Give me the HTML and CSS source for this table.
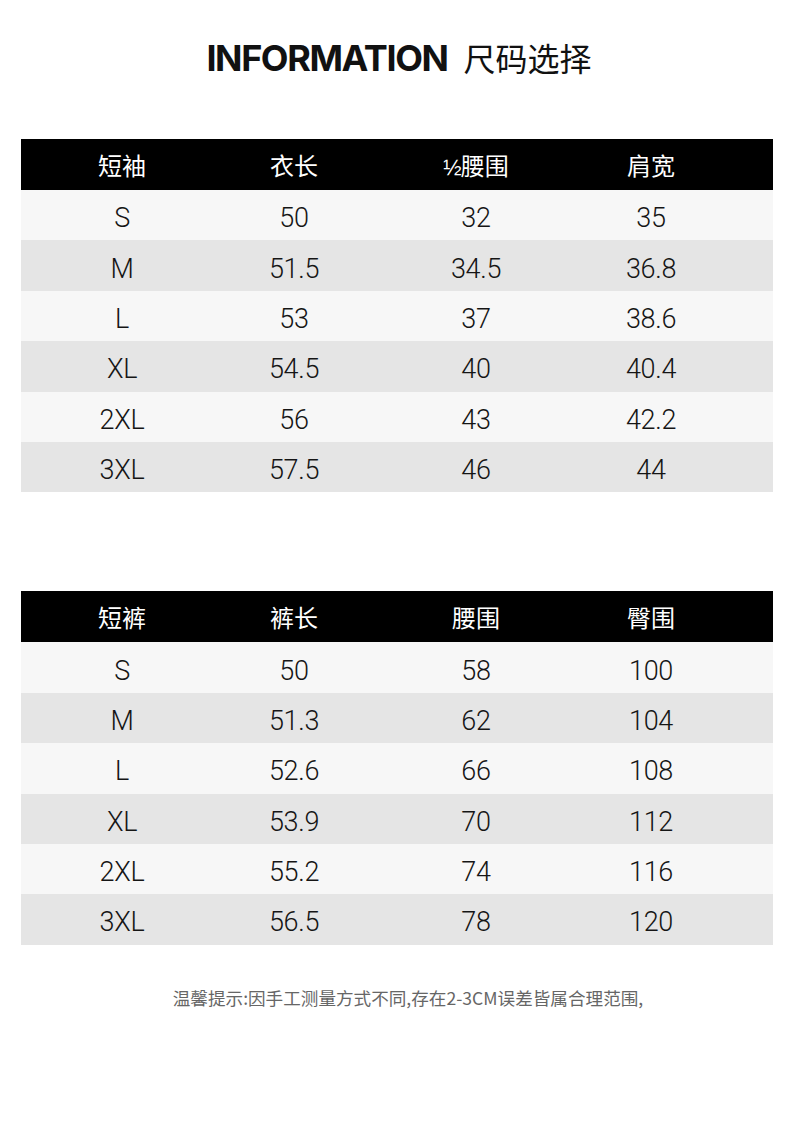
FILE: index.html
```html
<!DOCTYPE html>
<html lang="zh">
<head>
<meta charset="utf-8">
<link rel="stylesheet" href="styles.css">
</head>
<body>
<div class="page">
  <h1 class="title"><span class="title-en">INFORMATION</span><span class="title-cn">尺码选择</span></h1>

  <div class="size-table first">
    <div class="row head"><span>短袖</span><span>衣长</span><span><span class="half">½</span>腰围</span><span>肩宽</span></div>
    <div class="row light"><span>S</span><span>50</span><span>32</span><span>35</span></div>
    <div class="row dark"><span>M</span><span>51.5</span><span>34.5</span><span>36.8</span></div>
    <div class="row light"><span>L</span><span>53</span><span>37</span><span>38.6</span></div>
    <div class="row dark"><span>XL</span><span>54.5</span><span>40</span><span>40.4</span></div>
    <div class="row light"><span>2XL</span><span>56</span><span>43</span><span>42.2</span></div>
    <div class="row dark"><span>3XL</span><span>57.5</span><span>46</span><span>44</span></div>
  </div>

  <div class="size-table second">
    <div class="row head"><span>短裤</span><span>裤长</span><span>腰围</span><span>臀围</span></div>
    <div class="row light"><span>S</span><span>50</span><span>58</span><span>100</span></div>
    <div class="row dark"><span>M</span><span>51.3</span><span>62</span><span>104</span></div>
    <div class="row light"><span>L</span><span>52.6</span><span>66</span><span>108</span></div>
    <div class="row dark"><span>XL</span><span>53.9</span><span>70</span><span>112</span></div>
    <div class="row light"><span>2XL</span><span>55.2</span><span>74</span><span>116</span></div>
    <div class="row dark"><span>3XL</span><span>56.5</span><span>78</span><span>120</span></div>
  </div>

  <p class="note">温馨提示:因手工测量方式不同,存在2-3CM误差皆属合理范围,</p>
</div>
</body>
</html>
```

FILE: styles.css
```css
html, body {
  margin: 0;
  padding: 0;
  background: #ffffff;
}

.page {
  width: 790px;
  height: 1128px;
  padding: 0 17px 0 21px;
  box-sizing: border-box;
  font-family: "Roboto", "Liberation Sans", "Noto Sans CJK SC", sans-serif;
  color: #151515;
}

.title {
  margin: 0;
  padding-top: 36px;
  padding-left: 4px;
  height: 139px;
  box-sizing: border-box;
  display: flex;
  justify-content: center;
  align-items: baseline;
  gap: 16px;
  font-weight: normal;
  line-height: 42px;
}

.title-en {
  font-family: "Inter", "Liberation Sans", sans-serif;
  font-weight: 700;
  font-size: 36px;
  letter-spacing: -1.4px;
  color: #111111;
}

.title-cn {
  font-family: "Noto Sans CJK SC", sans-serif;
  font-size: 32px;
  font-weight: 400;
  color: #111111;
}

.size-table {
  width: 752px;
}

.second {
  margin-top: 99px;
}

.row {
  display: grid;
  grid-template-columns: 202px 142px 222px 128px 1fr;
  align-items: center;
  height: 50.4px;
  box-sizing: border-box;
  padding-top: 6px;
  font-size: 27px;
  font-weight: 300;
  letter-spacing: -0.3px;
}

.row > span {
  text-align: center;
}

.head {
  height: 51px;
  padding-top: 0;
  background: #000000;
  color: #ffffff;
  font-family: "Noto Sans CJK SC", sans-serif;
  font-size: 24px;
  font-weight: 400;
  letter-spacing: 0;
}

.half {
  font-family: "Liberation Sans", sans-serif;
  font-size: 22px;
  letter-spacing: -1px;
}

.light {
  background: #f7f7f7;
}

.dark {
  background: #e5e5e5;
}

.note {
  margin: 40px 0 0;
  padding-left: 22px;
  text-align: center;
  font-family: "Noto Sans CJK SC", sans-serif;
  font-size: 17.6px;
  color: #666666;
}
```
